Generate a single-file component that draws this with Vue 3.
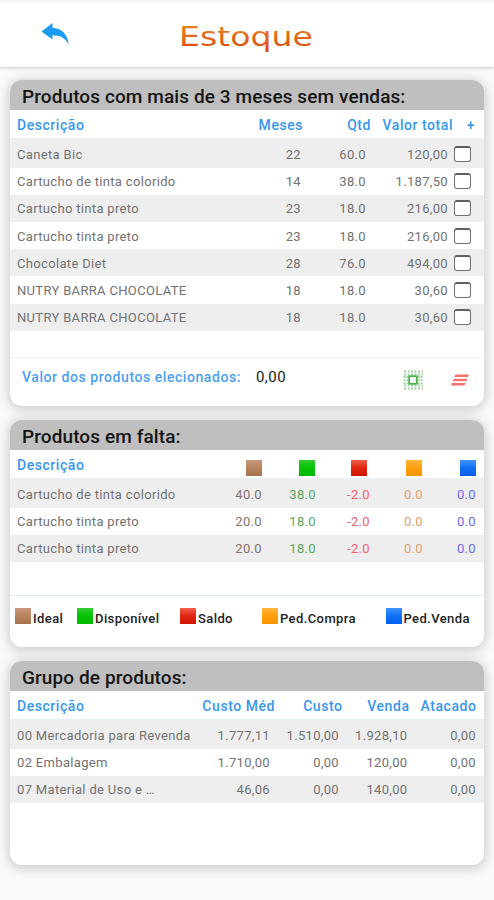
<template>
  <div class="page">
    <header class="topbar">
      <button class="back" aria-label="Voltar">
        <svg width="30" height="24" viewBox="0 0 30 24">
          <path d="M1.5 9.5 L12.5 1 V5.8 C21 6.2 28 12 28.6 22.5 C24.5 15.5 20 13.4 12.5 13.3 V17.5 Z" fill="#1c9cee" />
        </svg>
      </button>
      <svg class="logo" width="140" height="36" viewBox="0 0 140 36" role="img">
        <defs>
          <linearGradient id="logoFill" x1="0" y1="0" x2="0" y2="1">
            <stop offset="0" stop-color="#e88a2c" />
            <stop offset="1" stop-color="#d9480c" />
          </linearGradient>
        </defs>
        <text x="1" y="26" textLength="134" lengthAdjust="spacingAndGlyphs" fill="url(#logoFill)">Estoque</text>
      </svg>
    </header>

    <main>
      <section class="card sales">
        <h2>Produtos com mais de 3 meses sem vendas:</h2>
        <div class="head">
          <span>Descrição</span><span>Meses</span><span>Qtd</span><span>Valor total</span><span>+</span>
        </div>
        <div class="rows">
          <div v-for="(item, i) in semVendas" :key="i" class="row">
            <span>{{ item.nome }}</span>
            <span>{{ item.meses }}</span>
            <span>{{ item.qtd }}</span>
            <span>{{ item.valor }}</span>
            <input v-model="item.marcado" type="checkbox" />
          </div>
        </div>
        <footer class="total">
          <span class="total-label">Valor dos produtos elecionados:</span>
          <span class="total-value">0,00</span>
          <svg class="select-all" width="20" height="20" viewBox="0 0 20 20" fill="none" stroke="#4caf50">
            <path d="M1 1.5H20M1 4.5H20M1 15.5H20M1 18.5H20" stroke-width="2" stroke-dasharray="2 1.5" opacity=".55" />
            <path d="M1.5 6V14M4.5 6V14M15.5 6V14M18.5 6V14" stroke-width="2" stroke-dasharray="2 1.2" opacity=".55" />
            <rect x="6.2" y="6.2" width="7.6" height="7.6" stroke-width="1.8" fill="#fff" />
          </svg>
          <svg class="clear-all" width="18" height="12" viewBox="0 0 18 12" fill="#f4706c">
            <path d="M4.6 .4H18L17 3H3.5ZM2.9 4.7H16.3L15.3 7.3H1.8ZM1.1 9H14.5L13.5 11.6H0Z" />
          </svg>
        </footer>
      </section>

      <section class="card missing">
        <h2>Produtos em falta:</h2>
        <div class="head">
          <span>Descrição</span>
          <span v-for="l in legenda" :key="l.cor"><i class="box" :class="l.cor"></i></span>
        </div>
        <div class="rows">
          <div v-for="(item, i) in emFalta" :key="i" class="row">
            <span>{{ item.nome }}</span>
            <span v-for="(v, j) in item.valores" :key="j" :class="'t-' + legenda[j].cor">{{ v }}</span>
          </div>
        </div>
        <footer class="legend">
          <span v-for="l in legenda" :key="l.cor"><i class="box" :class="l.cor"></i>{{ l.texto }}</span>
        </footer>
      </section>

      <section class="card groups">
        <h2>Grupo de produtos:</h2>
        <div class="head">
          <span>Descrição</span><span>Custo Méd</span><span>Custo</span><span>Venda</span><span>Atacado</span>
        </div>
        <div class="rows">
          <div v-for="g in grupos" :key="g[0]" class="row">
            <span v-for="(v, j) in g" :key="j">{{ v }}</span>
          </div>
        </div>
      </section>
    </main>
  </div>
</template>

<script setup>
import { ref } from 'vue';

const semVendas = ref([
  { nome: 'Caneta Bic', meses: 22, qtd: '60.0', valor: '120,00', marcado: false },
  { nome: 'Cartucho de tinta colorido', meses: 14, qtd: '38.0', valor: '1.187,50', marcado: false },
  { nome: 'Cartucho tinta preto', meses: 23, qtd: '18.0', valor: '216,00', marcado: false },
  { nome: 'Cartucho tinta preto', meses: 23, qtd: '18.0', valor: '216,00', marcado: false },
  { nome: 'Chocolate Diet', meses: 28, qtd: '76.0', valor: '494,00', marcado: false },
  { nome: 'NUTRY BARRA CHOCOLATE', meses: 18, qtd: '18.0', valor: '30,60', marcado: false },
  { nome: 'NUTRY BARRA CHOCOLATE', meses: 18, qtd: '18.0', valor: '30,60', marcado: false },
]);

const legenda = [
  { cor: 'brown', texto: 'Ideal' },
  { cor: 'green', texto: 'Disponível' },
  { cor: 'red', texto: 'Saldo' },
  { cor: 'orange', texto: 'Ped.Compra' },
  { cor: 'blue', texto: 'Ped.Venda' },
];

const emFalta = [
  { nome: 'Cartucho de tinta colorido', valores: ['40.0', '38.0', '-2.0', '0.0', '0.0'] },
  { nome: 'Cartucho tinta preto', valores: ['20.0', '18.0', '-2.0', '0.0', '0.0'] },
  { nome: 'Cartucho tinta preto', valores: ['20.0', '18.0', '-2.0', '0.0', '0.0'] },
];

const grupos = [
  ['00 Mercadoria para Revenda', '1.777,11', '1.510,00', '1.928,10', '0,00'],
  ['02 Embalagem', '1.710,00', '0,00', '120,00', '0,00'],
  ['07 Material de Uso e …', '46,06', '0,00', '140,00', '0,00'],
];
</script>

<style>
body {
  background: #fafafa;
}
</style>

<style scoped>
.page {
  height: 900px;
  overflow: hidden;
  background: #fafafa;
  font-family: Roboto, sans-serif;
}

.topbar {
  position: relative;
  z-index: 1;
  box-sizing: border-box;
  height: 67px;
  display: flex;
  align-items: flex-start;
  padding: 18px 0 0 40px;
  background: #fff;
  border-top: 2px solid #f4f4f4;
  box-shadow: 0 1px 3px rgba(0, 0, 0, 0.2);
}

.back {
  width: 30px;
  height: 26px;
  padding: 2px 0 0;
  border: none;
  background: none;
  cursor: pointer;
}

.logo {
  margin-left: 108px;
  font-family: "DejaVu Sans", sans-serif;
  font-size: 26px;
}

main {
  display: flex;
  flex-direction: column;
  gap: 14px;
  padding: 13px 10px 35px;
}

.card {
  box-sizing: border-box;
  display: flex;
  flex-direction: column;
  overflow: hidden;
  border-radius: 12px;
  background: #fff;
  box-shadow: 0 2px 12px 2px rgba(0, 0, 0, 0.18);
}

.sales {
  height: 326px;
}

.missing {
  height: 227px;
}

.groups {
  height: 204px;
}

h2 {
  flex: none;
  height: 30px;
  margin: 0;
  padding-left: 12px;
  line-height: 33px;
  font-size: 19px;
  font-weight: 500;
  letter-spacing: 0.1px;
  color: #151515;
  background: #bfbfbf;
}

.head,
.row {
  display: grid;
  align-items: center;
  padding-left: 7px;
  white-space: nowrap;
}

.head {
  flex: none;
  box-sizing: border-box;
  height: 29px;
  padding-top: 2px;
  border-bottom: 1px solid #e4effa;
  font-size: 14px;
  font-weight: 500;
  letter-spacing: 0.55px;
  color: #3797ee;
}

.row {
  box-sizing: border-box;
  height: 27.2px;
  padding-top: 1px;
  font-size: 13px;
  letter-spacing: 0.33px;
  color: #727272;
}

.row:first-child {
  height: 28.6px;
  padding-top: 2px;
}

.row:nth-child(odd) {
  background: #eee;
}

.head > span:not(:first-child),
.row > span:not(:first-child) {
  text-align: right;
}

.rows {
  flex: 1;
}

.sales .head {
  grid-template-columns: 200px 86px 68px 82px 22px;
}

.sales .row {
  grid-template-columns: 200px 84px 65px 82px 22.5px;
}

.missing .head {
  grid-template-columns: 190px 55px 52.5px 52.5px 55px 54px;
}

.missing .row {
  grid-template-columns: 190px 55px 54px 54px 53px 53px;
}

.groups .head {
  grid-template-columns: 180px 78px 67.5px 67px 67px;
}

.groups .row {
  grid-template-columns: 180px 73px 69px 68.5px 68.5px;
}

input {
  appearance: none;
  box-sizing: border-box;
  justify-self: end;
  width: 17px;
  height: 16px;
  margin: 0 0 1px;
  border: 1px solid #707070;
  border-top: 2px solid #606060;
  border-radius: 3px;
  background: #fff;
}

.total {
  box-sizing: border-box;
  height: 49px;
  display: flex;
  align-items: flex-start;
  padding: 11px 15px 0 12px;
  border-top: 1px solid #edf3f9;
  font-size: 14px;
  line-height: 17px;
}

.total-label {
  font-weight: 500;
  letter-spacing: 0.56px;
  color: #4ba0ee;
}

.total-value {
  margin-left: 15px;
  font-size: 15px;
  letter-spacing: 0.5px;
  color: #222;
}

.select-all {
  margin: 1px 28px 0 auto;
}

.clear-all {
  margin-top: 5px;
}

.box {
  display: inline-block;
  width: 16px;
  height: 16px;
  vertical-align: middle;
}

.missing .head .box {
  margin-top: 5px;
}

.brown {
  background: linear-gradient(#c99a7c, #b98560 45%, #a6714f);
}

.green {
  background: linear-gradient(#35cc35, #05c405 45%, #00b800);
}

.red {
  background: linear-gradient(#f0604c, #e22a14 45%, #d01400);
}

.orange {
  background: linear-gradient(#ffb640, #ffa010 45%, #f79400);
}

.blue {
  background: linear-gradient(#4094fa, #1273f6 45%, #0560ee);
}

.t-brown {
  color: #85706c;
}

.t-green {
  color: #5ba75e;
}

.t-red {
  color: #f0606e;
}

.t-orange {
  color: #e0a070;
}

.t-blue {
  color: #7068ea;
}

.legend {
  box-sizing: border-box;
  height: 52px;
  display: grid;
  grid-template-columns: 62px 103px 82px 123.5px auto;
  align-items: start;
  padding: 12px 0 0 5px;
  border-top: 1px solid #d9ecfa;
  font-size: 13px;
  font-weight: 500;
  color: #222;
}

.legend > span {
  display: flex;
  gap: 2px;
  line-height: 21px;
  letter-spacing: 0.4px;
  white-space: nowrap;
}
</style>
